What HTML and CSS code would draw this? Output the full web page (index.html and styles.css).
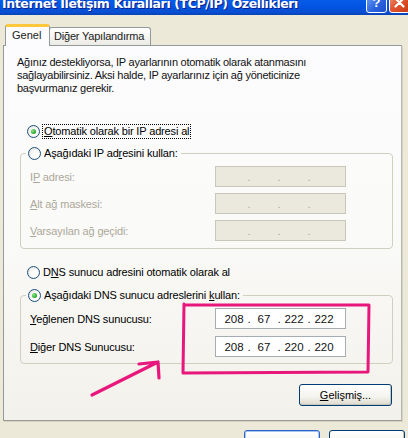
FILE: index.html
```html
<!DOCTYPE html>
<html lang="tr">
<head>
<meta charset="utf-8">
<link rel="stylesheet" href="styles.css">
</head>
<body>
<div class="window">
  <div class="titlebar">
    <span class="title">Internet İletişim Kuralları (TCP/IP) Özellikleri</span>
    <div class="tbtns">
      <span class="tbtn help">?</span>
      <span class="tbtn close"><svg width="11" height="11" viewBox="0 0 11 11"><path d="M1.5 1.5 L9.5 9.5 M9.5 1.5 L1.5 9.5" stroke="#fff" stroke-width="2.2" stroke-linecap="round"/></svg></span>
    </div>
  </div>

  <div class="tabs">
    <div class="tab active">Genel</div>
    <div class="tab">Diğer Yapılandırma</div>
  </div>

  <div class="panel">
    <p class="intro">Ağınız destekliyorsa, IP ayarlarının otomatik olarak atanmasını<br>sağlayabilirsiniz. Aksi halde, IP ayarlarınız için ağ yöneticinize<br>başvurmanız gerekir.</p>

    <div class="radio-row first"><span class="radio checked"></span><span class="focus"><u>O</u>tomatik olarak bir IP adresi al</span></div>

    <fieldset class="group g1">
      <legend><span class="radio"></span><span>Aşağıdaki IP ad<u>r</u>esini kullan:</span></legend>
      <div class="field disabled"><span class="lbl">I<u>P</u> adresi:</span><span class="ip"><i></i><b>.</b><i></i><b>.</b><i></i><b>.</b><i></i></span></div>
      <div class="field disabled"><span class="lbl"><u>A</u>lt ağ maskesi:</span><span class="ip"><i></i><b>.</b><i></i><b>.</b><i></i><b>.</b><i></i></span></div>
      <div class="field disabled"><span class="lbl"><u>V</u>arsayılan ağ geçidi:</span><span class="ip"><i></i><b>.</b><i></i><b>.</b><i></i><b>.</b><i></i></span></div>
    </fieldset>

    <div class="radio-row second"><span class="radio"></span><span>D<u>N</u>S sunucu adresini otomatik olarak al</span></div>

    <fieldset class="group g2">
      <legend><span class="radio checked"></span><span>Aşağıdaki DNS sunucu adreslerini <u>k</u>ullan:</span></legend>
      <div class="field dns"><span class="lbl"><u>Y</u>eğlenen DNS sunucusu:</span><span class="ip"><i>208</i><b>.</b><i>67</i><b>.</b><i>222</i><b>.</b><i>222</i></span></div>
      <div class="field dns"><span class="lbl"><u>D</u>iğer DNS Sunucusu:</span><span class="ip"><i>208</i><b>.</b><i>67</i><b>.</b><i>220</i><b>.</b><i>220</i></span></div>
    </fieldset>

    <div class="adv-row"><span class="btn adv"><u>G</u>elişmiş...</span></div>

    <svg class="annot" width="408" height="438" viewBox="0 0 408 438">
      <path d="M184 303 L183 372 L368 371 L369 304 L186 304" fill="none" stroke="#e8177c" stroke-width="3" stroke-linejoin="round" stroke-linecap="round"/>
      <path d="M92 394 L158 361 M139 363 L158 361 L159 377" fill="none" stroke="#e8177c" stroke-width="3.2" stroke-linejoin="round" stroke-linecap="round"/>
    </svg>
  </div>

  <div class="footer">
    <span class="btn ok">Tamam</span>
    <span class="btn cancel">İptal</span>
  </div>
</div>
</body>
</html>
```

FILE: styles.css
```css
* { box-sizing: border-box; }
html, body { margin: 0; padding: 0; }
body {
  background: #ece9d8;
  font-family: "Liberation Sans", Arial, sans-serif;
  font-size: 11px;
  color: #000;
  width: 408px;
  height: 438px;
  overflow: hidden;
}
.window {
  width: 408px;
  height: 438px;
  position: relative;
  overflow: hidden;
}
.titlebar {
  height: 30px;
  margin-top: -15px;
  background: linear-gradient(to bottom, #3d95ff 0%, #0a62e8 40%, #0054e3 70%, #0a4fd2 90%, #0842b8 100%);
  display: flex;
  justify-content: space-between;
  align-items: flex-end;
  padding: 0 0 1px 2px;
}
.title {
  color: #fff;
  font-family: "DejaVu Sans", sans-serif;
  font-weight: bold;
  font-size: 12.5px;
  line-height: 16px;
  padding-bottom: 2px;
  text-shadow: 1px 1px 0 #0a1e8c;
  letter-spacing: -0.4px;
  white-space: nowrap;
}
.tbtns {
  display: flex;
  gap: 2px;
  margin-right: -2px;
  padding-bottom: 1px;
}
.tbtn {
  width: 21px;
  height: 21px;
  border: 1px solid #fff;
  border-radius: 3px;
  display: flex;
  align-items: center;
  justify-content: center;
  color: #fff;
  font-weight: bold;
  font-size: 13px;
}
.help { background: linear-gradient(135deg, #7aa7f5, #2a63df 60%, #1c4fc8); }
.close { background: linear-gradient(135deg, #f09a7a, #e0532c 50%, #c83b16); }

.tabs {
  display: flex;
  align-items: flex-end;
  margin-top: 9px;
  padding-left: 5px;
  height: 21px;
  position: relative;
  z-index: 2;
}
.tab {
  height: 18px;
  padding: 0 4px;
  border: 1px solid #919b9c;
  border-bottom: none;
  border-radius: 3px 3px 0 0;
  background: linear-gradient(to bottom, #ffffff, #f3f3ef 60%, #ecebe6);
  line-height: 17px;
  color: #222;
  white-space: nowrap;
  letter-spacing: -0.2px;
}
.tab.active {
  width: 45px;
  padding-left: 6px;
  background: #fcfcfe;
  border-top: 3px solid #ffc83c;
  line-height: 17px;
  margin-bottom: -1px;
  height: 22px;
  letter-spacing: 0;
}
.tab + .tab { margin-left: -1px; width: 102px; overflow: hidden; }

.panel {
  position: relative;
  width: 399px;
  height: 376px;
  margin-left: 3px;
  border: 1px solid #919b9c;
  border-right-color: #b8b8b0;
  border-bottom-color: #9a9a90;
  background: linear-gradient(to bottom, #fcfcfe 0%, #fafaf8 50%, #f3f1eb 100%);
  padding: 10px 0 0 0;
  box-shadow: 1px 1px 0 #d6d3c4;
}
.intro {
  margin: 0 0 0 13px;
  line-height: 13px;
  color: #111;
  letter-spacing: -0.25px;
  white-space: nowrap;
}
.radio {
  display: inline-block;
  width: 13px;
  height: 13px;
  border-radius: 50%;
  border: 1px solid #1c5180;
  background: radial-gradient(circle at 60% 60%, #ffffff 30%, #dcdad0 100%);
  position: relative;
  flex: none;
}
.radio.checked::after {
  content: "";
  position: absolute;
  left: 3px; top: 3px;
  width: 5px; height: 5px;
  border-radius: 50%;
  background: radial-gradient(circle at 35% 35%, #8ee88e, #21a121 70%);
}
.radio-row, legend {
  display: flex;
  align-items: center;
  gap: 3px;
  height: 16px;
  white-space: nowrap;
  letter-spacing: -0.15px;
}
.radio-row { margin-left: 23px; }
.radio-row.first { margin-top: 28px; }
.focus { outline: 1px dotted #000; outline-offset: 0; padding: 0 1px; line-height: 13px; }
.group {
  margin: 6px 0 0 16px;
  width: 373px;
  border: 1px solid #d0d0bf;
  border-radius: 4px;
  padding: 0;
  min-width: 0;
}
.group legend {
  margin-left: 5px;
  padding: 0 3px 0 2px;
}
.g1 { height: 104px; margin-top: 6px; }
.g1 .field:first-of-type { margin-top: 5px; }
.field {
  display: flex;
  align-items: center;
  justify-content: space-between;
  height: 21px;
  margin-left: 9px;
  width: 316px;
  letter-spacing: -0.15px;
}
.g1 .field { margin-bottom: 6px; }
.field.disabled .lbl { color: #aca899; }
.ip {
  width: 131px;
  height: 21px;
  border: 1px solid #7f9db9;
  display: flex;
  align-items: center;
  padding-left: 7px;
  font-style: normal;
  letter-spacing: 0;
}
.ip i {
  font-style: normal;
  width: 22px;
  text-align: center;
}
.ip b {
  font-weight: normal;
  width: 8px;
  text-align: center;
}
.disabled .ip { background: #ebe9dd; border-color: #c9c7ba; color: #aca899; }
.dns .ip { background: #fff; border-color: #a5acb2; font-size: 11.5px; color: #111; }
.radio-row.second { margin-top: 15px; }
.g2 { height: 77px; margin-top: 7px; }
.g2 .field:first-of-type { margin-top: 5px; }
.g2 .field + .field { margin-top: 7px; }

.adv-row {
  display: flex;
  justify-content: flex-end;
  margin: 20px 9px 0 0;
}
.btn {
  display: inline-flex;
  align-items: center;
  justify-content: center;
  height: 22px;
  border: 1px solid #003c74;
  border-radius: 3px;
  background: linear-gradient(to bottom, #ffffff 0%, #f4f3ee 60%, #dcd9cc 100%);
  box-shadow: inset -1px -1px 0 #c8c6b8;
}
.adv { width: 93px; }
.annot {
  position: absolute;
  left: -4px;
  top: -45px;
  pointer-events: none;
}
.footer {
  display: flex;
  justify-content: flex-end;
  gap: 9px;
  padding: 9px 3px 0 0;
}
.footer .btn { width: 76px; height: 23px; align-items: flex-start; padding-top: 7px; }
.ok { border-color: #2c62c8; box-shadow: inset 0 0 0 1px #a8c4f0; }
```
